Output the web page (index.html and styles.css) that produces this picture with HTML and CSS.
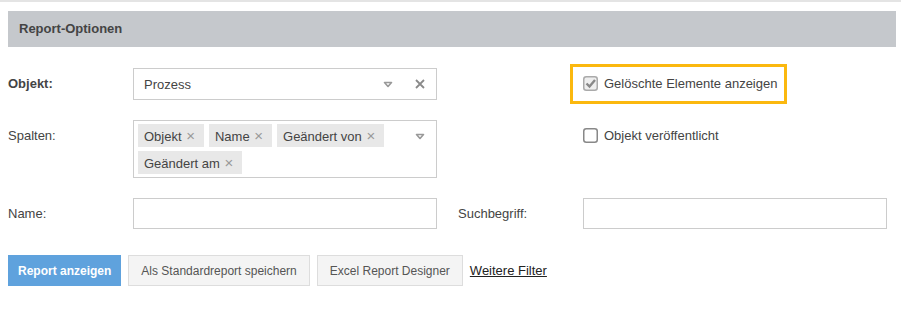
FILE: index.html
```html
<!DOCTYPE html>
<html lang="de">
<head>
  <meta charset="UTF-8">
  <title>Report-Optionen</title>
  <link rel="stylesheet" href="styles.css">
</head>
<body>
  <div class="topline"></div>
  <div class="page">
    <div class="panel-head">Report-Optionen</div>

    <form class="options">
      <!-- Zeile 1 -->
      <label class="lbl strong">Objekt:</label>
      <div class="select">
        <span class="select-value">Prozess</span>
        <svg class="caret" width="10" height="7" viewBox="0 0 10 7"><path d="M1.5 1.5h7L5 5.5z" fill="none" stroke="#999" stroke-width="1.6" stroke-linejoin="round"/></svg>
        <svg class="clear" width="10" height="10" viewBox="0 0 10 10"><path d="M1 1l8 8M9 1l-8 8" stroke="#8a8a8a" stroke-width="1.8"/></svg>
      </div>
      <div></div>
      <div></div>
      <div class="check-cell">
        <label class="check highlight">
          <svg class="box" width="15" height="15" viewBox="0 0 15 15">
            <rect x="0.75" y="0.75" width="13.5" height="13.5" rx="2.5" fill="#eee" stroke="#aaa" stroke-width="1.5"/>
            <path d="M3.5 7.5l3 3 5.5-6.5" fill="none" stroke="#888" stroke-width="2.4"/>
          </svg>
          Gelöschte Elemente anzeigen
        </label>
      </div>

      <!-- Zeile 2 -->
      <label class="lbl">Spalten:</label>
      <div class="multi">
        <div class="tags">
          <span class="tag">Objekt <i>×</i></span>
          <span class="tag">Name <i>×</i></span>
          <span class="tag">Geändert von <i>×</i></span>
          <span class="tag">Geändert am <i>×</i></span>
        </div>
        <svg class="caret" width="10" height="7" viewBox="0 0 10 7"><path d="M1.5 1.5h7L5 5.5z" fill="none" stroke="#999" stroke-width="1.6" stroke-linejoin="round"/></svg>
      </div>
      <div></div>
      <div></div>
      <div class="check-cell">
        <label class="check">
          <svg class="box" width="15" height="15" viewBox="0 0 15 15">
            <rect x="0.75" y="0.75" width="13.5" height="13.5" rx="2.5" fill="#fff" stroke="#888" stroke-width="1.5"/>
          </svg>
          Objekt veröffentlicht
        </label>
      </div>

      <!-- Zeile 3 -->
      <label class="lbl">Name:</label>
      <input type="text" class="field">
      <div></div>
      <label class="lbl">Suchbegriff:</label>
      <input type="text" class="field">
    </form>

    <div class="actions">
      <button type="button" class="btn primary">Report anzeigen</button>
      <button type="button" class="btn">Als Standardreport speichern</button>
      <button type="button" class="btn">Excel Report Designer</button>
      <a href="#" class="link">Weitere Filter</a>
    </div>
  </div>
</body>
</html>
```

FILE: styles.css
```css
body {
  margin: 0;
  font-family: "Liberation Sans", Arial, sans-serif;
  font-size: 13px;
  color: #444;
  background: #fff;
}

.topline {
  height: 2px;
  background: #e4e4e4;
}

.page {
  padding: 9px 5px 0 8px;
}

.panel-head {
  background: #c5c8cc;
  height: 36px;
  line-height: 36px;
  padding-left: 11px;
  font-weight: bold;
  color: #444;
}

.options {
  display: grid;
  grid-template-columns: 125px 304px 21px 125px 304px;
  row-gap: 20px;
  margin-top: 21px;
  align-items: start;
}

.lbl {
  line-height: 31px;
  color: #444;
}

.lbl.strong {
  font-weight: bold;
}

.select {
  height: 32px;
  box-sizing: border-box;
  border: 1px solid #ccc;
  display: flex;
  align-items: center;
  padding-left: 10px;
  padding-right: 11px;
}

.select-value {
  flex: 1;
}

.select .caret {
  margin-right: 22px;
}

.multi {
  border: 1px solid #ccc;
  display: flex;
  align-items: flex-start;
  padding: 3px 11px 3px 4px;
}

.multi .caret {
  margin-top: 9px;
  margin-left: auto;
}

.tags {
  display: flex;
  flex-wrap: wrap;
  gap: 4px 5px;
  width: 260px;
}

.tag {
  background: #e8e8e8;
  height: 23px;
  line-height: 23px;
  padding: 0 9px 0 6px;
  color: #444;
}

.tag i {
  font-style: normal;
  font-size: 15px;
  color: #999;
  margin-left: 1px;
}

.check-cell {
  height: 31px;
  display: flex;
  align-items: center;
}

.check {
  display: inline-flex;
  align-items: center;
  gap: 6px;
  line-height: 16px;
  color: #444;
}

.check .box {
  flex: none;
}

.highlight {
  outline: 3px solid #fbb80f;
  padding: 9px 7px 9px 10px;
  margin: -9px 0 -9px -10px;
}

.field {
  height: 31px;
  box-sizing: border-box;
  border: 1px solid #ccc;
  margin: 0;
  padding: 0 8px;
  font: inherit;
}

.actions {
  display: flex;
  align-items: center;
  gap: 7px;
  margin-top: 26px;
}

.btn {
  height: 31px;
  border: 1px solid #ddd;
  background: #f4f4f4;
  color: #555;
  font-family: inherit;
  font-size: 12px;
  padding: 0 12px;
  cursor: pointer;
}

.btn.primary {
  background: #5fa2dd;
  border-color: #5fa2dd;
  color: #fff;
  font-weight: bold;
  padding: 0 9px;
}

.link {
  color: #222;
  text-decoration: underline;
  font-size: 13px;
}
```
